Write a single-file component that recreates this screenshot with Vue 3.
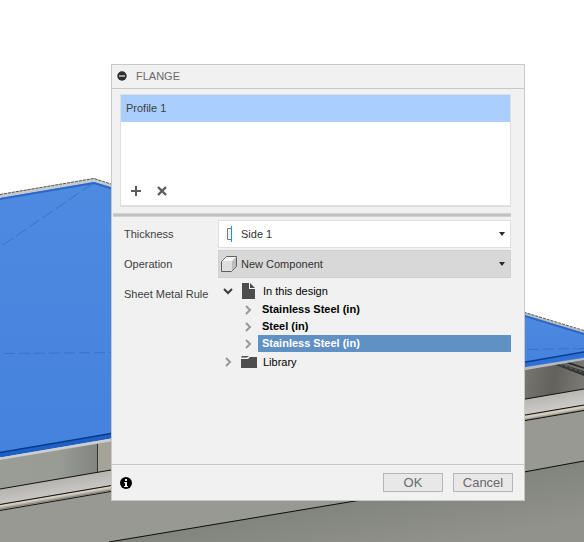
<script setup>
import { ref } from 'vue'

const profiles = ref(['Profile 1'])
const activeProfile = ref(0)
const thickness = ref('Side 1')
const operation = ref('New Component')
const rules = ['Stainless Steel (in)', 'Steel (in)', 'Stainless Steel (in)']
const selectedRule = ref(2)
</script>

<template>
  <main class="stage">
    <svg class="scene" viewBox="0 0 584 542" preserveAspectRatio="xMidYMid slice" aria-hidden="true">
      <defs>
        <linearGradient id="face" x1="0" y1="0" x2="0" y2="1">
          <stop offset="0" stop-color="#4e8ae0" />
          <stop offset="1" stop-color="#4582de" />
        </linearGradient>
        <linearGradient id="wall" gradientUnits="userSpaceOnUse" x1="0" y1="0" x2="97" y2="0">
          <stop offset="0" stop-color="#9a9c96" />
          <stop offset="0.6" stop-color="#999b95" />
          <stop offset="1" stop-color="#838580" />
        </linearGradient>
        <linearGradient id="inner" gradientUnits="userSpaceOnUse" x1="524" y1="375" x2="584" y2="385">
          <stop offset="0" stop-color="#777570" />
          <stop offset="0.5" stop-color="#63615c" />
          <stop offset="1" stop-color="#7c7a75" />
        </linearGradient>
        <linearGradient id="beam" gradientUnits="userSpaceOnUse" x1="0" y1="489" x2="3" y2="506">
          <stop offset="0" stop-color="#b4b3b0" />
          <stop offset="1" stop-color="#cac9c6" />
        </linearGradient>
        <linearGradient id="floor" gradientUnits="userSpaceOnUse" x1="340" y1="500" x2="350" y2="560">
          <stop offset="0" stop-color="#81837d" />
          <stop offset="1" stop-color="#90928b" />
        </linearGradient>
      </defs>

      <polygon points="0,455 584,355 584,542 0,542" fill="#979992" />
      <polygon points="0,455 97,438 97,474 0,490" fill="url(#wall)" />
      <polygon points="98,438 130,433 130,469 98,474" fill="#a5a298" />
      <polygon points="520,366 584,355 584,390 520,401" fill="url(#inner)" />
      <polygon points="553,364 558,363 584,371 584,376" fill="#34373a" />
      <path d="M564 361.500 584 368" stroke="#222426" stroke-width="1.500" fill="none" />
      <path d="M560 364.500 584 372.500" stroke="#63676b" stroke-dasharray="3 2" fill="none" />
      <path d="M97.500 441V473" stroke="#333531" stroke-width="1" />

      <polygon points="0,489 584,389 584,405 0,504" fill="url(#beam)" />
      <polygon points="0,504 584,405 584,411 0,511" fill="#b5afa3" />
      <path d="M0 506 584 407" stroke="#d5cec1" stroke-width="2" />
      <path d="M0 509 584 410" stroke="#817f79" stroke-width="1" />
      <path d="M0 489 584 389M0 504.500 584 405M0 510.500 584 410.500" stroke="#111" fill="none" />
      <polygon points="109,542 355,501 524,472 584,461 584,542" fill="url(#floor)" />
      <path d="M109 542 355 501 524 472 584 461" stroke="#0b0c0b" fill="none" />

      <polygon points="0,194 94,178 120,187 120,440 0,460" fill="#c6c9ce" />
      <path d="M0 194.500 94 178.500 120 187" stroke="#58595c" stroke-dasharray="3 1" fill="none" />
      <polygon points="0,198 94,182 120,190 120,436 0,457" fill="url(#face)" />
      <path d="M0 199 94 183 120 191" stroke="#2a69c8" stroke-width="2" fill="none" />
      <path d="M0 455 120 434.500" stroke="#1f60c7" stroke-width="5" />
      <path d="M0 452.500 120 432" stroke="#063b8c" stroke-width="1.300" />
      <path d="M0 458.500 120 438" stroke="#cfcfcf" stroke-width="2" />
      <path d="M92 184 0 247" stroke="#3672cb" stroke-dasharray="12 4" fill="none" />
      <path d="M4 353.500 120 352.500" stroke="#3974ca" stroke-dasharray="11 4" fill="none" />

      <polygon points="520,311 584,331 584,360 520,371" fill="#b9bbbd" />
      <path d="M520 311 584 330.500" stroke="#58595c" stroke-dasharray="3 1" fill="none" />
      <polygon points="520,314 584,333 584,358 520,368" fill="url(#face)" />
      <path d="M520 314.500 584 334" stroke="#2a69c8" stroke-width="2" fill="none" />
      <path d="M520 365.500 584 355" stroke="#2f70d5" stroke-width="4" />
      <path d="M520 363 584 352" stroke="#083c8e" stroke-width="1.500" />
      <path d="M528 349.500 584 348.500" stroke="#3974ca" stroke-dasharray="11 4" fill="none" />
    </svg>

    <section class="dialog" role="dialog" aria-labelledby="dialog-title">
      <header class="head">
        <button class="plain" type="button" aria-label="Collapse">
          <svg width="10" height="10" viewBox="0 0 10 10">
            <circle cx="5" cy="5" r="4.700" fill="#2d2d2d" />
            <path d="M2 5H8" stroke="#f1f1f1" stroke-width="1.200" />
          </svg>
        </button>
        <h1 id="dialog-title">FLANGE</h1>
      </header>

      <div class="body">
        <div class="listbox">
          <ul class="profiles">
            <li v-for="(p, i) in profiles" :key="p">
              <button class="profile" :class="{ active: i === activeProfile }" type="button" @click="activeProfile = i">{{ p }}</button>
            </li>
          </ul>
          <div class="tools">
            <button class="plain" type="button" aria-label="Add profile">
              <svg width="12" height="12" viewBox="0 0 12 12"><path d="M6 1V11M1 6H11" stroke="#5c5c5c" stroke-width="2" /></svg>
            </button>
            <button class="plain" type="button" aria-label="Remove profile">
              <svg width="12" height="12" viewBox="0 0 12 12"><path d="M2 2 10 10M10 2 2 10" stroke="#5c5c5c" stroke-width="2.400" /></svg>
            </button>
          </div>
        </div>

        <div class="rule"></div>

        <div class="form">
          <label for="thickness">Thickness</label>
          <div class="picker">
            <svg class="lead" width="18" height="18" viewBox="0 0 18 18">
              <path d="M11 3.500H7.500V14.500H11" fill="#f5f5f5" stroke="#777" />
              <path d="M11.500 1V17" stroke="#0a9bf5" />
            </svg>
            <select id="thickness" v-model="thickness">
              <option>Side 1</option>
              <option>Side 2</option>
            </select>
            <svg class="caret" width="6" height="4" viewBox="0 0 6 4"><path d="M0 0H6L3 4Z" fill="#2b2b2b" /></svg>
          </div>

          <label for="operation">Operation</label>
          <div class="picker grey">
            <svg class="lead" width="18" height="18" viewBox="0 0 18 18">
              <path d="M1.500 6.500 6.500 1.500H16.500V11.500L11.500 16.500H1.500Z" fill="#dedede" stroke="#606060" stroke-linejoin="round" />
              <path d="M2.500 6 6.500 2H15.500L11.500 6Z" fill="#f6f6f6" />
              <path d="M12 6.500 16 2.500V11.500L12 15.500Z" fill="#bdbdbd" />
            </svg>
            <select id="operation" v-model="operation">
              <option>New Component</option>
              <option>New Body</option>
            </select>
            <svg class="caret" width="6" height="4" viewBox="0 0 6 4"><path d="M0 0H6L3 4Z" fill="#2b2b2b" /></svg>
          </div>

          <span id="rule-label" class="rule-label">Sheet Metal Rule</span>
          <div class="tree" role="tree" aria-labelledby="rule-label">
            <button class="node" type="button" role="treeitem" aria-expanded="true">
              <svg class="arrow" width="10" height="10" viewBox="0 0 10 10"><path d="M1 3 5 7 9 3" fill="none" stroke="#3c3c3c" stroke-width="2" /></svg>
              <svg class="glyph" width="16" height="16" viewBox="0 0 16 16">
                <path d="M1 0H8V6H14V16H1Z" fill="#4d4d4d" />
                <path d="M9 0 14 5H9Z" fill="#4d4d4d" />
              </svg>
              <span>In this design</span>
            </button>
            <button
              v-for="(r, i) in rules"
              :key="i"
              class="leaf"
              :class="{ selected: i === selectedRule }"
              type="button"
              role="treeitem"
              @click="selectedRule = i"
            >
              <svg class="arrow" width="10" height="10" viewBox="0 0 10 10"><path d="M3 1 7 5 3 9" fill="none" stroke="#999" stroke-width="2" /></svg>
              <span class="name">{{ r }}</span>
            </button>
            <button class="node" type="button" role="treeitem" aria-expanded="false">
              <svg class="arrow" width="10" height="10" viewBox="0 0 10 10"><path d="M3 1 7 5 3 9" fill="none" stroke="#999" stroke-width="2" /></svg>
              <svg class="glyph" width="16" height="16" viewBox="0 0 16 16">
                <path d="M0 5H7L9 3H16V14H0Z" fill="#4d4d4d" />
                <path d="M0 3.500H6L8 2H1Z" fill="#4d4d4d" />
              </svg>
              <span>Library</span>
            </button>
          </div>
        </div>
      </div>

      <footer class="foot">
        <button class="plain" type="button" aria-label="Information">
          <svg width="12" height="12" viewBox="0 0 12 12">
            <circle cx="6" cy="6" r="6" fill="#000" />
            <path d="M5 2H7V4H5ZM4 5H7V9H8V10H4V9H5V6H4Z" fill="#f1f1f1" />
          </svg>
        </button>
        <div class="actions">
          <button class="action" type="button">OK</button>
          <button class="action" type="button">Cancel</button>
        </div>
      </footer>
    </section>
  </main>
</template>

<style>
body {
  background: #fff;
}
</style>

<style scoped>
.stage,
.stage * {
  box-sizing: border-box;
}
.stage {
  position: relative;
  min-height: 100vh;
  padding: 64px 59px 40px 111px;
  font-family: "Liberation Sans", Arial, sans-serif;
  font-size: 11px;
  line-height: 16px;
  color: #404040;
}
.scene {
  position: absolute;
  inset: 0;
  width: 100%;
  height: 100%;
}
.dialog {
  position: relative;
  display: flex;
  flex-direction: column;
  background: #f1f1f1;
  border: 1px solid #c8c8c8;
}
button {
  margin: 0;
  padding: 0;
  border: 0;
  background: none;
  font: inherit;
  color: inherit;
  text-align: left;
}
svg {
  display: block;
  flex: none;
}
.head {
  display: flex;
  align-items: center;
  gap: 9px;
  height: 24px;
  padding: 0 5px 1px;
  border-bottom: 1px solid #c8c8c8;
}
h1 {
  margin: 0;
  font-size: 11px;
  font-weight: 400;
  color: #6a6a6a;
}
.body {
  padding: 5px 13px 93px 1px;
}
.listbox {
  display: flex;
  flex-direction: column;
  justify-content: space-between;
  min-height: 113px;
  margin-left: 7px;
  border: 1px solid #dfdfdf;
  border-bottom-width: 2px;
  background: #fff;
}
.profiles {
  margin: 0;
  padding: 0;
  list-style: none;
}
.profile {
  display: block;
  width: 100%;
  height: 27px;
  padding: 0 5px 2px;
}
.profile.active {
  background: #aacfff;
}
.tools {
  display: flex;
  gap: 14px;
  padding: 8px 9px;
}
.rule {
  height: 4px;
  margin: 6px 0 3px;
  background: #c2c2c2;
  border: 1px solid #d2d2d2;
  border-width: 1px 0;
}
.form {
  display: grid;
  grid-template-columns: 94px 1fr;
  row-gap: 2px;
  padding-left: 11px;
}
.form label,
.rule-label {
  align-self: start;
  padding: 6px 0;
}
.picker {
  position: relative;
  border: 1px solid #dfdfdf;
  background: #fff;
}
.picker.grey {
  border-color: #d0d0d0;
  background: #d8d8d8;
}
.picker select {
  display: block;
  appearance: none;
  width: 100%;
  height: 26px;
  margin: 0;
  padding: 0 20px 0 22px;
  border: 0;
  background: none;
  font: inherit;
  color: #333;
}
.lead,
.caret {
  position: absolute;
  pointer-events: none;
}
.lead {
  top: 4px;
  left: 1px;
}
.caret {
  top: 11px;
  right: 5px;
}
.tree {
  display: flex;
  flex-direction: column;
  padding-top: 1px;
  color: #000;
}
.node {
  display: flex;
  align-items: center;
  height: 19px;
  padding-left: 5px;
}
.node:first-child {
  margin-bottom: 1px;
}
.node .glyph {
  margin: 0 6px 0 8px;
}
.leaf {
  display: flex;
  align-items: center;
  gap: 5px;
  height: 17px;
  padding-left: 25px;
  font-weight: 700;
}
.name {
  flex: 1;
  padding: 0 4px;
  line-height: 17px;
}
.selected .name {
  background: #6091c5;
  color: #fff;
}
.foot {
  display: flex;
  align-items: center;
  justify-content: space-between;
  height: 36px;
  padding: 0 11px 0 8px;
  border-top: 1px solid #c8c8c8;
}
.actions {
  display: flex;
  gap: 10px;
}
.action {
  width: 60px;
  height: 19px;
  border: 1px solid #b5b5b5;
  background: #e8e8e8;
  font-size: 13px;
  line-height: 16px;
  text-align: center;
  color: #6a6a6a;
}
</style>
